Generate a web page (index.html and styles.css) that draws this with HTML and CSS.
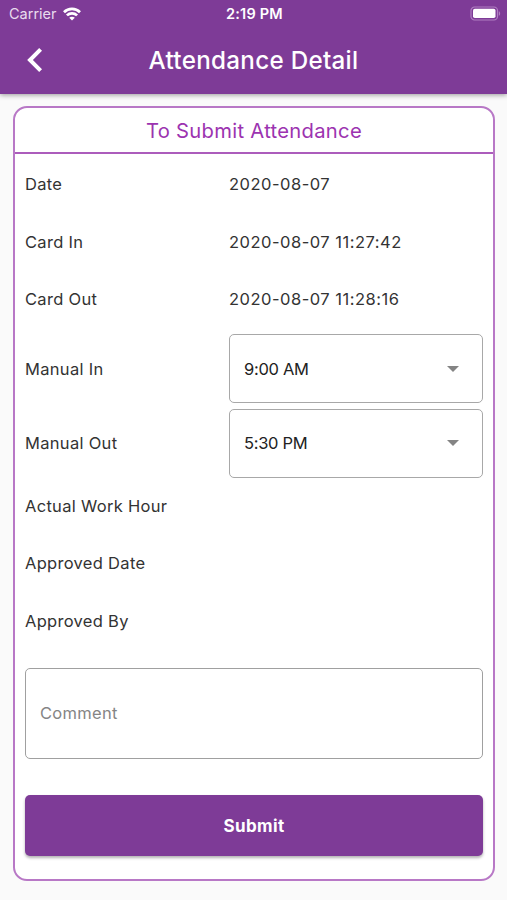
FILE: index.html
```html
<!DOCTYPE html>
<html lang="en">
<head>
    <meta charset="UTF-8">
    <meta name="viewport" content="width=device-width, initial-scale=1.0">
    <title>Attendance Detail</title>
    <link rel="stylesheet" href="styles.css">
</head>
<body>
    <header class="app-header">
        <div class="status-bar">
            <div class="carrier">
                <span>Carrier</span>
                <svg width="18" height="14" viewBox="0 0 18 14" fill="none" stroke="#fff" stroke-width="2.7">
                    <path d="M1 5.2C5.4.8 12.6.8 17 5.2"/>
                    <path d="M3.9 8.4c2.8-2.8 7.4-2.8 10.2 0"/>
                    <path d="M9 13.6L6.2 10.8c1.6-1.5 4-1.5 5.6 0z" fill="#fff" stroke="none"/>
                </svg>
            </div>
            <span class="time">2:19 PM</span>
            <svg class="battery" width="31" height="15" viewBox="0 0 31 15">
                <rect x="1" y="1" width="26.5" height="13" rx="3.6" fill="none" stroke="#b07fc2" stroke-width="1.2"/>
                <rect x="3" y="2.8" width="22.5" height="9.2" rx="1.8" fill="#fff"/>
                <path d="M28.8 5.2c1.8.6 1.8 4 0 4.6z" fill="#b07fc2"/>
            </svg>
        </div>
        <div class="nav-bar">
            <svg class="back" width="16" height="26" viewBox="0 0 16 26" fill="none" stroke="#fff" stroke-width="4">
                <path d="M13.6 2.4L3 13l10.6 10.6"/>
            </svg>
            <h1>Attendance Detail</h1>
        </div>
    </header>

    <form class="card">
        <h2>To Submit Attendance</h2>
        <div class="card-body">
            <div class="row">
                <span class="label">Date</span>
                <span class="value">2020-08-07</span>
            </div>
            <div class="row">
                <span class="label">Card In</span>
                <span class="value">2020-08-07 11:27:42</span>
            </div>
            <div class="row">
                <span class="label">Card Out</span>
                <span class="value">2020-08-07 11:28:16</span>
            </div>
            <div class="manual">
                <div class="row">
                    <span class="label">Manual In</span>
                    <div class="select"><span>9:00 AM</span><i class="arrow"></i></div>
                </div>
                <div class="row">
                    <span class="label">Manual Out</span>
                    <div class="select"><span>5:30 PM</span><i class="arrow"></i></div>
                </div>
            </div>
            <div class="row"><span class="label">Actual Work Hour</span></div>
            <div class="row"><span class="label">Approved Date</span></div>
            <div class="row"><span class="label">Approved By</span></div>
            <input class="comment" type="text" placeholder="Comment">
            <button class="submit" type="button">Submit</button>
        </div>
    </form>
</body>
</html>
```

FILE: styles.css
```css
* {
    box-sizing: border-box;
}
body {
    margin: 0;
    height: 900px;
    overflow: hidden;
    background: #fafafa;
    color: #333;
    font-family: Inter, "Liberation Sans", sans-serif;
    font-size: 16.5px;
    letter-spacing: 0.3px;
}
.app-header {
    height: 94px;
    background: #7e3b97;
    color: #fff;
    box-shadow: 0 1px 5px rgba(0, 0, 0, 0.4);
}
.status-bar {
    display: grid;
    grid-template-columns: 1fr auto 1fr;
    align-items: center;
    height: 27px;
    padding: 0 6px 0 9px;
    font-size: 14.5px;
}
.carrier {
    display: flex;
    align-items: center;
    gap: 6px;
    color: #e9dbee;
    letter-spacing: 0;
}
.time {
    margin-right: 1px;
    font-size: 14.5px;
    font-weight: 600;
    letter-spacing: 0.2px;
}
.battery {
    justify-self: end;
}
.nav-bar {
    display: grid;
    grid-template-columns: 54px 1fr 54px;
    align-items: center;
    height: 66px;
}
.back {
    margin-left: 27px;
}
h1 {
    margin: 0;
    font-size: 24.2px;
    font-weight: 500;
    text-align: center;
}
.card {
    height: 775px;
    margin: 12px 12px 0 13px;
    border: 2px solid #b878c6;
    border-radius: 14px;
    background: #fff;
}
h2 {
    height: 46px;
    margin: 0;
    border-bottom: 2px solid #ac5cbc;
    color: #9c33b0;
    font-size: 20.2px;
    font-weight: 400;
    line-height: 46px;
    text-align: center;
}
.card-body {
    display: flex;
    flex-direction: column;
    padding: 1.5px 10px 0;
}
.row {
    display: grid;
    grid-template-columns: 204px 1fr;
    align-items: center;
    height: 57.5px;
}
.value {
    letter-spacing: 0.5px;
}
.manual {
    display: grid;
    gap: 6px;
    padding-top: 6px;
}
.manual .row {
    height: 68.5px;
}
.select {
    display: flex;
    align-items: center;
    justify-content: space-between;
    height: 69px;
    padding: 0 23px 0 14px;
    border: 1px solid #a8a8a8;
    border-radius: 5px;
    color: #222;
    letter-spacing: -0.3px;
}
.arrow {
    border: 6px solid transparent;
    border-top-color: #848484;
    border-bottom: 0;
}
.comment {
    height: 91px;
    margin-top: 18px;
    padding: 0 14px;
    border: 1px solid #a0a0a0;
    border-radius: 5px;
    background: #fff;
    font: inherit;
    letter-spacing: inherit;
}
.comment::placeholder {
    color: #858585;
}
.submit {
    height: 61px;
    margin-top: 36.5px;
    border: 0;
    border-radius: 5px;
    background: #7e3b97;
    color: #fff;
    font: inherit;
    font-size: 17px;
    font-weight: 700;
    letter-spacing: 0.4px;
    box-shadow: 0 2px 3px rgba(0, 0, 0, 0.3);
}
```
